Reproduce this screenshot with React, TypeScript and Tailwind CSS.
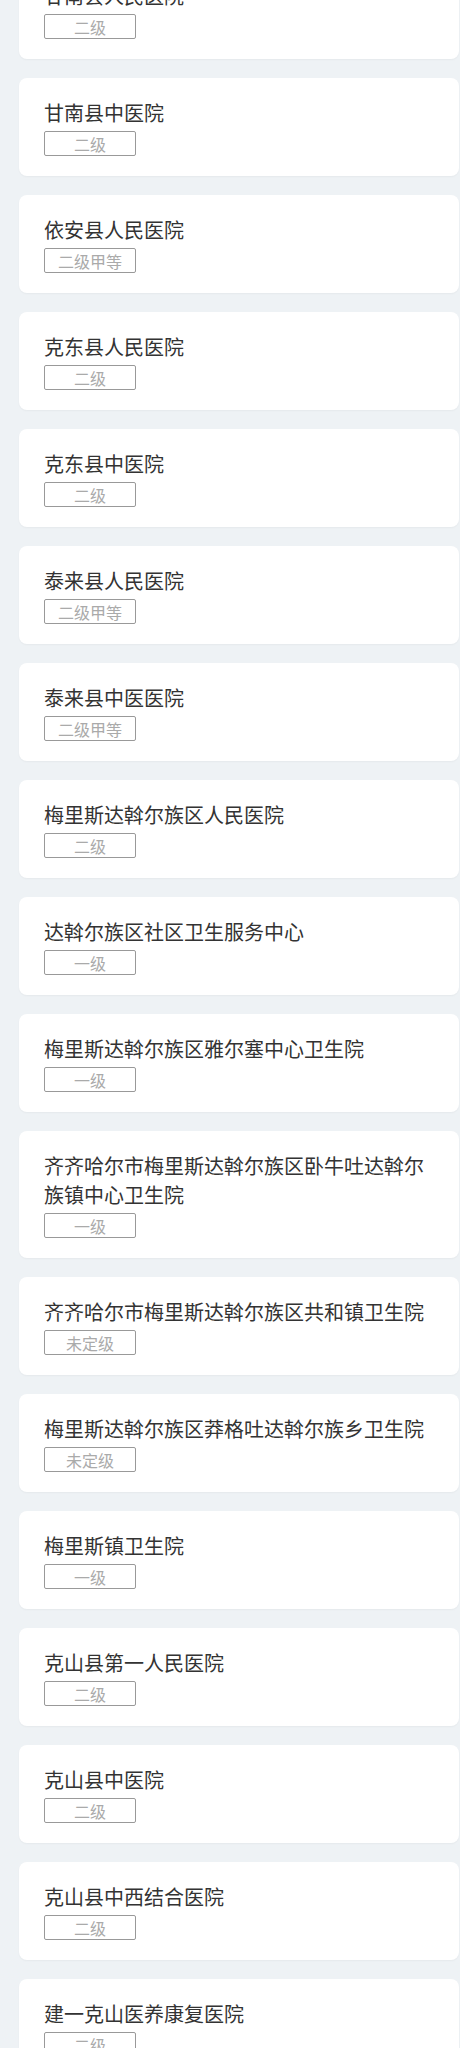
const hospitals = [
  { name: "甘南县人民医院", level: "二级" },
  { name: "甘南县中医院", level: "二级" },
  { name: "依安县人民医院", level: "二级甲等" },
  { name: "克东县人民医院", level: "二级" },
  { name: "克东县中医院", level: "二级" },
  { name: "泰来县人民医院", level: "二级甲等" },
  { name: "泰来县中医医院", level: "二级甲等" },
  { name: "梅里斯达斡尔族区人民医院", level: "二级" },
  { name: "达斡尔族区社区卫生服务中心", level: "一级" },
  { name: "梅里斯达斡尔族区雅尔塞中心卫生院", level: "一级" },
  { name: "齐齐哈尔市梅里斯达斡尔族区卧牛吐达斡尔族镇中心卫生院", level: "一级" },
  { name: "齐齐哈尔市梅里斯达斡尔族区共和镇卫生院", level: "未定级" },
  { name: "梅里斯达斡尔族区莽格吐达斡尔族乡卫生院", level: "未定级" },
  { name: "梅里斯镇卫生院", level: "一级" },
  { name: "克山县第一人民医院", level: "二级" },
  { name: "克山县中医院", level: "二级" },
  { name: "克山县中西结合医院", level: "二级" },
  { name: "建一克山医养康复医院", level: "二级" },
];

export default function App() {
  return (
    <div
      className="min-h-screen overflow-hidden bg-[#eef2f5]"
      style={{ fontFamily: '"Noto Sans CJK SC", "Noto Sans", sans-serif' }}
    >
      <div className="-mt-[39px] flex flex-col gap-[19px] pl-[19px] pr-[1px]">
        {hospitals.map((h) => (
          <div
            key={h.name}
            className="rounded-[8px] bg-white px-[25px] py-[20px] shadow-[0_1px_2px_rgba(0,0,0,0.04)]"
          >
            <div className="text-[20px] leading-[29px] text-[#333]">
              {h.name}
            </div>
            <div className="mt-[4px] flex h-[25px] w-[92px] items-center justify-center rounded-[2px] border border-[#999] text-[16px] leading-none text-[#aaa]">
              {h.level}
            </div>
          </div>
        ))}
      </div>
    </div>
  );
}
